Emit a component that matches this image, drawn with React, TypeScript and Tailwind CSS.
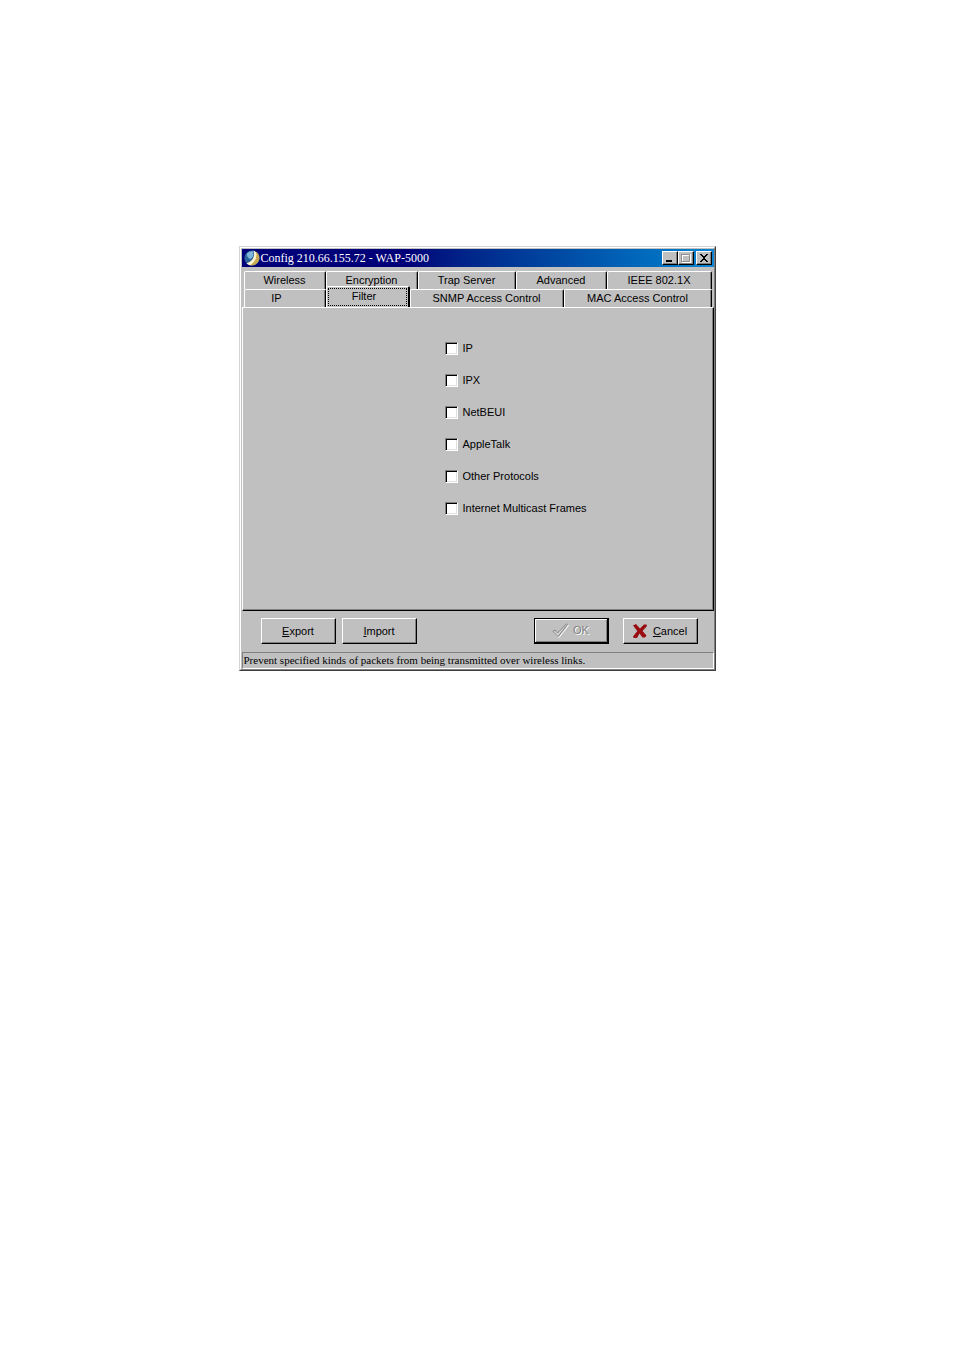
import { useState } from "react";
import type { ReactNode } from "react";

const backTabs = ["Wireless", "Encryption", "Trap Server", "Advanced", "IEEE 802.1X"];
const frontTabs = ["IP", "Filter", "SNMP Access Control", "MAC Access Control"];

const protocols = [
  { id: "ip", label: "IP" },
  { id: "ipx", label: "IPX" },
  { id: "netbeui", label: "NetBEUI" },
  { id: "appletalk", label: "AppleTalk" },
  { id: "other", label: "Other Protocols" },
  { id: "multicast", label: "Internet Multicast Frames" },
];

const raised =
  "bg-[#c0c0c0] border border-t-white border-l-white border-r-black border-b-black shadow-[inset_-1px_-1px_0_#808080]";

const AppIcon = () => (
  <svg viewBox="0 0 16 16" className="w-4 h-4 shrink-0" aria-hidden="true">
    <circle cx="8" cy="8" r="7.6" fill="#2a6299" />
    <path d="M3 3.500c2-2 4-2.500 6-2C10 5 9 7.500 6.500 9 4.500 8.500 2.500 6.500 3 3.500z" fill="#7db8dc" />
    <path d="M9.500.6A7.600 7.600 0 0 1 5 15c-1-.4-1.800-1-2.500-1.800C8 12 11.500 6.500 9.500.6z" fill="#fff6cf" />
    <path d="M12 1.600A7.600 7.600 0 0 1 6 15.300C11 12.500 13.500 7 12 1.600z" fill="#c9a850" />
  </svg>
);

const CheckIcon = () => (
  <svg viewBox="0 0 17 15" className="w-[17px] h-[15px]" fill="none" aria-hidden="true">
    <path d="M2 9.500l2-1.500 2.500 2.500L15 2l1.500.5L7 14.500z" stroke="#fff" />
    <path d="M1 8.500L3 7l2.500 3L14.500.8l1 .7L6 13.500z" fill="#d4d4d4" stroke="#808080" />
  </svg>
);

const CrossIcon = () => (
  <svg viewBox="0 0 14 14" className="w-[14px] h-[14px]" aria-hidden="true">
    <path d="M0 1.500L3 0l4 4.500L11 .5h2.500L14 2 9.500 7l4 4.500-1.500 2H9.500L6.500 9.500 4 14H.8L0 12.500 4.300 7z" fill="#990c12" />
  </svg>
);

const CaptionButton = ({ label, disabled, children }: { label: string; disabled?: boolean; children: ReactNode }) => (
  <button aria-label={label} disabled={disabled} className={`w-4 h-[14px] flex items-center justify-center ${raised}`}>
    <svg viewBox="0 0 12 10" className="w-3 h-[10px]" fill="none" shapeRendering="crispEdges">
      {children}
    </svg>
  </button>
);

type TabProps = { label: string; active: boolean; onSelect: () => void; className?: string };

const Tab = ({ label, active, onSelect, className = "justify-center" }: TabProps) => (
  <button
    role="tab"
    aria-selected={active}
    onClick={onSelect}
    className={`flex items-center whitespace-nowrap rounded-t-xs border-t border-l border-t-white border-l-white border-r-black ${
      active
        ? "relative z-10 -mt-[3px] -mb-px h-[21px] border-r-2 bg-[#c0c0c0] p-px"
        : "h-[18px] border-r shadow-[inset_-1px_0_0_#808080]"
    } ${className}`}
  >
    <span className={active ? "w-full h-full leading-[15px] border border-dotted border-black pr-1.5" : ""}>{label}</span>
  </button>
);

const App = () => {
  const [tab, setTab] = useState("Filter");
  const [checked, setChecked] = useState<string[]>([]);

  const toggle = (id: string) =>
    setChecked((prev) => (prev.includes(id) ? prev.filter((p) => p !== id) : [...prev, id]));

  return (
    <main className="min-h-screen bg-white pt-[246px]">
      <div className="mx-auto w-full max-w-[477px] border border-[#d4d4d4] border-r-[#404040] border-b-[#404040] bg-[#c0c0c0] text-black font-['Liberation_Sans',Arial,sans-serif] text-[11px]">
        <div className="border border-t-white border-l-white border-r-[#808080] border-b-[#808080] pt-px pl-px">
          {/* Title bar */}
          <header className="h-[18px] flex items-center px-0.5 bg-linear-to-r from-[#000078] from-35% to-[#1084d0]">
            <AppIcon />
            <h1 className="grow pl-px text-white font-['Liberation_Serif','Times_New_Roman',serif] text-[12px] leading-4">
              Config 210.66.155.72 - WAP-5000
            </h1>
            <CaptionButton label="Minimize">
              <path d="M2 7h6v2H2z" fill="#000" />
            </CaptionButton>
            <CaptionButton label="Maximize" disabled>
              <path d="M2 1h8v8H2zM2 2h8" stroke="#fff" />
              <path d="M1.500 1.500h8v7h-8z" stroke="#909090" />
            </CaptionButton>
            <div className="w-0.5" />
            <CaptionButton label="Close">
              <path d="M2 1h2v1h1v1h2V2h1V1h2v1H9v1H8v1H7v2h1v1h1v1h1v1H8V8H7V7H5v1H4v1H2V8h1V7h1V6h1V4H4V3H3V2H2z" fill="#000" />
            </CaptionButton>
          </header>

          {/* Tabs */}
          <div role="tablist" className="pt-1 px-0.5">
            <div className="grid grid-cols-[82fr_92fr_98fr_91fr_105fr]">
              {backTabs.map((name) => (
                <Tab key={name} label={name} active={tab === name} onSelect={() => setTab(name)} />
              ))}
            </div>
            <div className="grid grid-cols-[82fr_84fr_154fr_148fr]">
              {frontTabs.map((name) => (
                <Tab
                  key={name}
                  label={name}
                  active={tab === name}
                  onSelect={() => setTab(name)}
                  className={name === "IP" ? "justify-center pr-4" : "justify-center"}
                />
              ))}
            </div>
          </div>

          {/* Filter options */}
          <section
            role="tabpanel"
            className="h-[304px] pt-8 pl-[43%] border border-t-white border-l-white border-r-black border-b-black shadow-[inset_-1px_-1px_0_#808080]"
          >
            <div className="flex flex-col gap-4">
              {protocols.map(({ id, label }) => (
                <label key={id} htmlFor={id} className="h-4 flex items-center gap-1">
                  <input
                    id={id}
                    type="checkbox"
                    checked={checked.includes(id)}
                    onChange={() => toggle(id)}
                    className="appearance-none w-[13px] h-[13px] border border-t-[#808080] border-l-[#808080] border-r-white border-b-white bg-white shadow-[inset_1px_1px_0_#000,inset_-1px_-1px_0_#dfdfdf] checked:bg-black"
                  />
                  {label}
                </label>
              ))}
            </div>
          </section>

          <div className="flex gap-1.5 pt-[7px] pb-2 pl-[19px] pr-4">
            <button className={`w-[75px] h-[26px] ${raised}`}>
              <u>E</u>xport
            </button>
            <button className={`w-[75px] h-[26px] ${raised}`}>
              <u>I</u>mport
            </button>
            <button
              disabled
              className="ml-auto mr-2 w-[75px] h-[26px] flex items-center justify-center gap-1 border border-black border-r-2 border-b-2 text-[#808080] [text-shadow:1px_1px_0_#fff] shadow-[inset_1px_1px_0_#fff,inset_-1px_-1px_0_#808080]"
            >
              <CheckIcon />
              OK
            </button>
            <button className={`w-[75px] h-[26px] flex items-center justify-center gap-1.5 ${raised}`}>
              <CrossIcon />
              <span>
                <u>C</u>ancel
              </span>
            </button>
          </div>

          <footer className="h-[17px] px-px border border-t-[#808080] border-l-[#808080] border-r-white border-b-white font-['Liberation_Serif','Times_New_Roman',serif] leading-[14px]">
            Prevent specified kinds of packets from being transmitted over wireless links.
          </footer>
        </div>
      </div>
    </main>
  );
};

export default App;
